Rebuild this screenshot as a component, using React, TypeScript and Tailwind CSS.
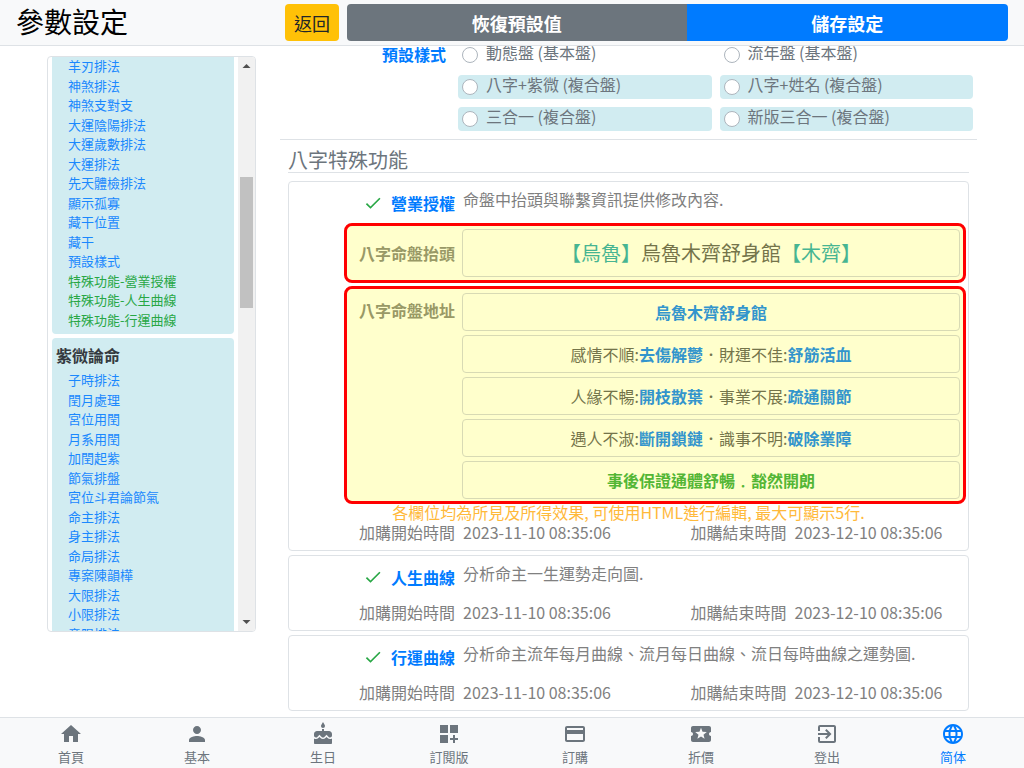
import type { ReactNode } from "react";
import type { IconType } from "react-icons";
import {
  MdCake,
  MdCheck,
  MdCreditCard,
  MdDashboardCustomize,
  MdExitToApp,
  MdHome,
  MdLanguage,
  MdLocalActivity,
  MdPerson,
} from "react-icons/md";

const baziLinks = [
  "羊刃排法",
  "神煞排法",
  "神煞支對支",
  "大運陰陽排法",
  "大運歲數排法",
  "大運排法",
  "先天體檢排法",
  "顯示孤寡",
  "藏干位置",
  "藏干",
  "預設樣式",
];

const featureLinks = ["特殊功能-營業授權", "特殊功能-人生曲線", "特殊功能-行運曲線"];

const ziweiLinks = [
  "子時排法",
  "閏月處理",
  "宮位用閏",
  "月系用閏",
  "加閏起紫",
  "節氣排盤",
  "宮位斗君論節氣",
  "命主排法",
  "身主排法",
  "命局排法",
  "專案陳韻樺",
  "大限排法",
  "小限排法",
  "童限排法",
];

const styleOptions = [
  { label: "動態盤 (基本盤)", tinted: false },
  { label: "流年盤 (基本盤)", tinted: false },
  { label: "八字+紫微 (複合盤)", tinted: true },
  { label: "八字+姓名 (複合盤)", tinted: true },
  { label: "三合一 (複合盤)", tinted: true },
  { label: "新版三合一 (複合盤)", tinted: true },
];

const tabs: { label: string; icon: IconType; active?: boolean }[] = [
  { label: "首頁", icon: MdHome },
  { label: "基本", icon: MdPerson },
  { label: "生日", icon: MdCake },
  { label: "訂閱版", icon: MdDashboardCustomize },
  { label: "訂購", icon: MdCreditCard },
  { label: "折價", icon: MdLocalActivity },
  { label: "登出", icon: MdExitToApp },
  { label: "简体", icon: MdLanguage, active: true },
];

function Header() {
  return (
    <header className="relative z-10 flex shrink-0 items-center border-b border-[#dee2e6] bg-[#f8f9fa] px-4 py-1">
      <h1 className="w-[269px] shrink-0 pb-1 text-[28px] leading-8 text-black">參數設定</h1>
      <button type="button" className="h-[37px] shrink-0 rounded bg-[#ffc107] px-[9px] text-lg leading-6 text-[#212529]">
        返回
      </button>
      <div className="ml-2 flex flex-1 text-lg leading-6 font-bold text-white">
        <button type="button" className="h-[37px] flex-auto rounded-l bg-[#6c757d]">
          恢復預設值
        </button>
        <button type="button" className="h-[37px] flex-auto rounded-r bg-[#007bff]">
          儲存設定
        </button>
      </div>
    </header>
  );
}

function LinkList({ items, className }: { items: string[]; className: string }) {
  return (
    <ul className={className}>
      {items.map((item) => (
        <li key={item}>
          <a href="#">{item}</a>
        </li>
      ))}
    </ul>
  );
}

function Sidebar() {
  return (
    <aside className="mt-[10px] mb-[85px] flex w-[209px] shrink-0 overflow-hidden rounded border border-[#dee2e6]">
      <nav className="min-h-0 flex-1 overflow-hidden px-1 text-[13px] leading-normal">
        <div className="-mt-px rounded-b bg-[#d1ecf1] pb-[5px] pl-4">
          <LinkList items={baziLinks} className="text-[#1a88fe]" />
          <LinkList items={featureLinks} className="text-[#28a745]" />
        </div>
        <div className="mt-1 rounded bg-[#d1ecf1] pt-1 pl-4">
          <h2 className="-ml-3 pb-[2px] text-base leading-[26px] font-bold text-[#343a40]">紫微論命</h2>
          <LinkList items={ziweiLinks} className="text-[#1a88fe]" />
        </div>
      </nav>
      <div className="flex w-[17px] shrink-0 flex-col items-center bg-[#f1f1f1]" aria-hidden="true">
        <svg viewBox="0 0 17 17" className="h-[17px] w-[17px] shrink-0">
          <path d="M8.5 7 L12.5 11 L4.5 11 Z" fill="#505050" />
        </svg>
        <div className="mt-[103px] h-[131px] w-[13px] bg-[#c1c1c1]" />
        <svg viewBox="0 0 17 17" className="mt-auto h-[17px] w-[17px] shrink-0">
          <path d="M8.5 10 L12.5 6 L4.5 6 Z" fill="#505050" />
        </svg>
      </div>
    </aside>
  );
}

function StyleOptions() {
  return (
    <fieldset className="-mt-[3px] flex gap-3 border-b border-[#dee2e6] pr-1 pb-2">
      <div className="w-[166px] shrink-0 text-right leading-[22px] font-bold text-[#007bff]" id="style-label">
        預設樣式
      </div>
      <div className="grid flex-1 grid-cols-2 gap-2" role="radiogroup" aria-labelledby="style-label">
        {styleOptions.map((o) => (
          <label
            key={o.label}
            className={`flex h-6 items-start gap-2 rounded pl-1 leading-[18px] ${o.tinted ? "bg-[#d1ecf1]" : ""}`}
          >
            <input
              type="radio"
              name="default-style"
              className="mt-1 size-4 shrink-0 appearance-none rounded-full border border-[#adb5bd] bg-white checked:border-4 checked:border-[#007bff]"
            />
            {o.label}
          </label>
        ))}
      </div>
    </fieldset>
  );
}

function Feature({
  title,
  description,
  children,
}: {
  title: string;
  description: string;
  children?: ReactNode;
}) {
  return (
    <section className="rounded border border-[#dee2e6] pt-[5px] pb-[7px] text-[#808080]">
      <div className="flex gap-2">
        <h3 className="mt-1 flex w-[166px] shrink-0 items-center justify-end gap-2 leading-6 font-bold text-[#007bff]">
          <MdCheck className="size-5 text-[#28a745]" />
          {title}
        </h3>
        <p className="leading-6">{description}</p>
      </div>
      {children ?? <div className="h-3" />}
      <dl className="grid grid-cols-2 leading-[22px]">
        <div className="flex gap-2">
          <dt className="w-[166px] text-right">加購開始時間</dt>
          <dd>2023-11-10 08:35:06</dd>
        </div>
        <div className="flex gap-2">
          <dt className="w-[158px] text-right">加購結束時間</dt>
          <dd>2023-12-10 08:35:06</dd>
        </div>
      </dl>
    </section>
  );
}

function Field({ labelledBy, className, children }: { labelledBy: string; className: string; children: ReactNode }) {
  return (
    <div
      role="textbox"
      contentEditable
      suppressContentEditableWarning
      aria-labelledby={labelledBy}
      className={`rounded border border-[#d8dab4] text-center ${className}`}
    >
      {children}
    </div>
  );
}

function Strong({ children }: { children: ReactNode }) {
  return <b className="font-bold text-[#3395cc]">{children}</b>;
}

function HeadingEditor() {
  return (
    <div className="mt-2 mr-[2px] ml-[55px] flex gap-[7px] rounded-lg border-[3px] border-[#ff0000] bg-[#ffffcc] p-[3px] pl-0">
      <div id="heading-label" className="w-[108px] shrink-0 self-center text-right leading-6 font-bold text-[#999966]">
        八字命盤抬頭
      </div>
      <Field labelledBy="heading-label" className="flex-1 py-2 text-xl leading-[30px] text-[#74744a]">
        <span className="text-[#47b592]">【烏魯】</span>烏魯木齊舒身館<span className="text-[#47b592]">【木齊】</span>
      </Field>
    </div>
  );
}

function AddressEditor() {
  const line = "py-[6px] leading-6 text-[#74744a]";
  return (
    <div className="mt-[3px] mr-[2px] ml-[55px] flex gap-[7px] rounded-lg border-[3px] border-[#ff0000] bg-[#ffffcc] pt-1 pr-[3px] pb-[2px]">
      <div id="address-label" className="w-[108px] shrink-0 pt-[5px] text-right leading-6 font-bold text-[#999966]">
        八字命盤地址
      </div>
      <div className="flex flex-1 flex-col gap-1">
        <Field labelledBy="address-label" className={line}>
          <Strong>烏魯木齊舒身館</Strong>
        </Field>
        <Field labelledBy="address-label" className={line}>
          感情不順:<Strong>去傷解鬱</Strong>．財運不佳:<Strong>舒筋活血</Strong>
        </Field>
        <Field labelledBy="address-label" className={line}>
          人緣不暢:<Strong>開枝散葉</Strong>．事業不展:<Strong>疏通關節</Strong>
        </Field>
        <Field labelledBy="address-label" className={line}>
          遇人不淑:<Strong>斷開鎖鏈</Strong>．識事不明:<Strong>破除業障</Strong>
        </Field>
        <Field labelledBy="address-label" className={line}>
          <b className="font-bold text-[#53b635]">事後保證通體舒暢﹒豁然開朗</b>
        </Field>
      </div>
    </div>
  );
}

function TabBar() {
  return (
    <nav className="relative z-10 flex h-[51px] shrink-0 border-t border-[#dee2e6] bg-[#f8f9fa] px-2">
      {tabs.map(({ label, icon: Icon, active }) => (
        <a
          key={label}
          href="#"
          className={`flex flex-1 flex-col items-center pt-1 text-[13px] leading-5 ${active ? "text-[#007bff]" : "text-[#6c757d]"}`}
        >
          <Icon className="size-6 shrink-0" />
          <span className="mt-px">{label}</span>
        </a>
      ))}
    </nav>
  );
}

export default function App() {
  return (
    <div className="flex h-screen flex-col bg-white font-['Noto_Sans_CJK_TC','Noto_Sans_CJK_SC',sans-serif] text-base text-[#6c757d]">
      <Header />
      <main className="flex min-h-0 flex-1 gap-6 overflow-hidden px-[47px]">
        <Sidebar />
        <div className="min-w-0 flex-1">
          <StyleOptions />
          <div className="flex flex-col gap-1 px-2">
            <h2 className="mb-1 border-b border-[#dee2e6] pt-2 text-xl leading-6">八字特殊功能</h2>
            <Feature title="營業授權" description="命盤中抬頭與聯繫資訊提供修改內容.">
              <HeadingEditor />
              <AddressEditor />
              <p className="text-center leading-[17px] text-[#ffb93b]">
                各欄位均為所見及所得效果, 可使用HTML進行編輯, 最大可顯示5行.
              </p>
            </Feature>
            <Feature title="人生曲線" description="分析命主一生運勢走向圖." />
            <Feature title="行運曲線" description="分析命主流年每月曲線、流月每日曲線、流日每時曲線之運勢圖." />
          </div>
        </div>
      </main>
      <TabBar />
    </div>
  );
}
